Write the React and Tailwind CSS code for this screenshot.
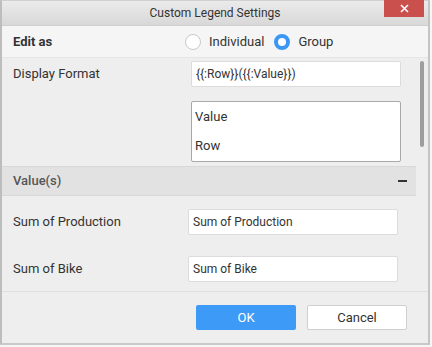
import React, { useState } from 'react';

const font = { fontFamily: 'Roboto, "Noto Sans", sans-serif' };

const Radio = ({ checked, label, onClick }) => (
  <label className="flex items-center cursor-pointer" onClick={onClick}>
    {checked ? (
      <span className="w-[16px] h-[16px] rounded-full border-[4px] border-[#3a97f5] bg-white" />
    ) : (
      <span className="w-[16px] h-[16px] rounded-full border border-[#c8c8c8] bg-white" />
    )}
    <span className="ml-[8px] text-[13px] text-[#333]">{label}</span>
  </label>
);

const Field = ({ label, value, left }) => (
  <div className="flex items-center">
    <div className={`${left} text-[13px] text-[#333] pl-[11px]`}>{label}</div>
    <input
      defaultValue={value}
      className="w-[210px] h-[26px] bg-white border border-[#dcdcdc] rounded-[2px] px-[4px] text-[12px] text-[#333] outline-none"
    />
  </div>
);

export default function App() {
  const [mode, setMode] = useState('group');

  return (
    <div className="w-[432px] h-[347px] bg-[#f6f6f6]" style={font}>
      <div className="w-[430px] h-[345px] flex flex-col bg-[#eeeeee] border-l-2 border-r-2 border-b-2 border-l-[#bdbdbd] border-r-[#c4c4c4] border-b-[#c9c9c9] border-t border-t-[#d0d0d0]">
        {/* Title bar */}
        <div className="relative h-[25px] flex items-center justify-center bg-gradient-to-b from-[#ebebeb] to-[#d8d8d8] border-b border-[#cfcfcf]">
          <span className="text-[12px] text-[#333]">Custom Legend Settings</span>
          <button className="absolute right-[4px] top-[-1px] w-[40px] h-[17px] bg-[#c9504d] flex items-center justify-center">
            <svg width="9" height="9" viewBox="0 0 9 9">
              <path d="M1 1L8 8M8 1L1 8" stroke="#fff" strokeWidth="1.6" />
            </svg>
          </button>
        </div>

        {/* Edit as */}
        <div className="h-[32px] flex items-center bg-[#f5f5f5] border-b border-[#e6e6e6]">
          <div className="w-[183px] pl-[11px] text-[13px] font-bold text-[#333]">Edit as</div>
          <Radio checked={mode === 'individual'} label="Individual" onClick={() => setMode('individual')} />
          <div className="w-[10px]" />
          <Radio checked={mode === 'group'} label="Group" onClick={() => setMode('group')} />
        </div>

        {/* Scroll area */}
        <div className="flex flex-1 min-h-0">
          <div className="flex-1 flex flex-col pt-[3px]">
            <Field label="Display Format" value="{{:Row}}({{:Value}})" left="w-[189px]" />

            <div className="flex mt-[14px]">
              <div className="w-[189px]" />
              <div className="w-[210px] h-[61px] bg-white border border-[#a9a9a9] rounded-[2px] text-[13px] text-[#333]">
                <div className="h-[29px] flex items-center pl-[3px]">Value</div>
                <div className="h-[29px] flex items-center pl-[3px]">Row</div>
              </div>
            </div>

            <div className="mt-[4px] h-[30px] flex items-center justify-between bg-[#e2e2e2] border-y border-[#d8d8d8] pl-[11px] pr-[9px]">
              <span className="text-[13px] font-medium text-[#555]">Value(s)</span>
              <span className="w-[9px] h-[2px] bg-[#333]" />
            </div>

            <div className="mt-[13px]">
              <Field label="Sum of Production" value="Sum of Production" left="w-[186px]" />
            </div>
            <div className="mt-[21px]">
              <Field label="Sum of Bike" value="Sum of Bike" left="w-[186px]" />
            </div>
          </div>
          <div className="w-[12px] pt-[3px] flex justify-center">
            <div className="w-[4px] h-[86px] rounded-full bg-[#9e9e9e]" />
          </div>
        </div>

        {/* Footer */}
        <div className="h-[52px] flex items-start justify-end pt-[13px] pr-[21px] gap-[11px] border-t border-[#e0e0e0]">
          <button className="w-[100px] h-[25px] bg-[#3d9bf7] text-white text-[13px] rounded-[2px]">OK</button>
          <button className="w-[100px] h-[25px] bg-white border border-[#cfcfcf] text-[#333] text-[13px] rounded-[2px]">Cancel</button>
        </div>
      </div>
    </div>
  );
}
